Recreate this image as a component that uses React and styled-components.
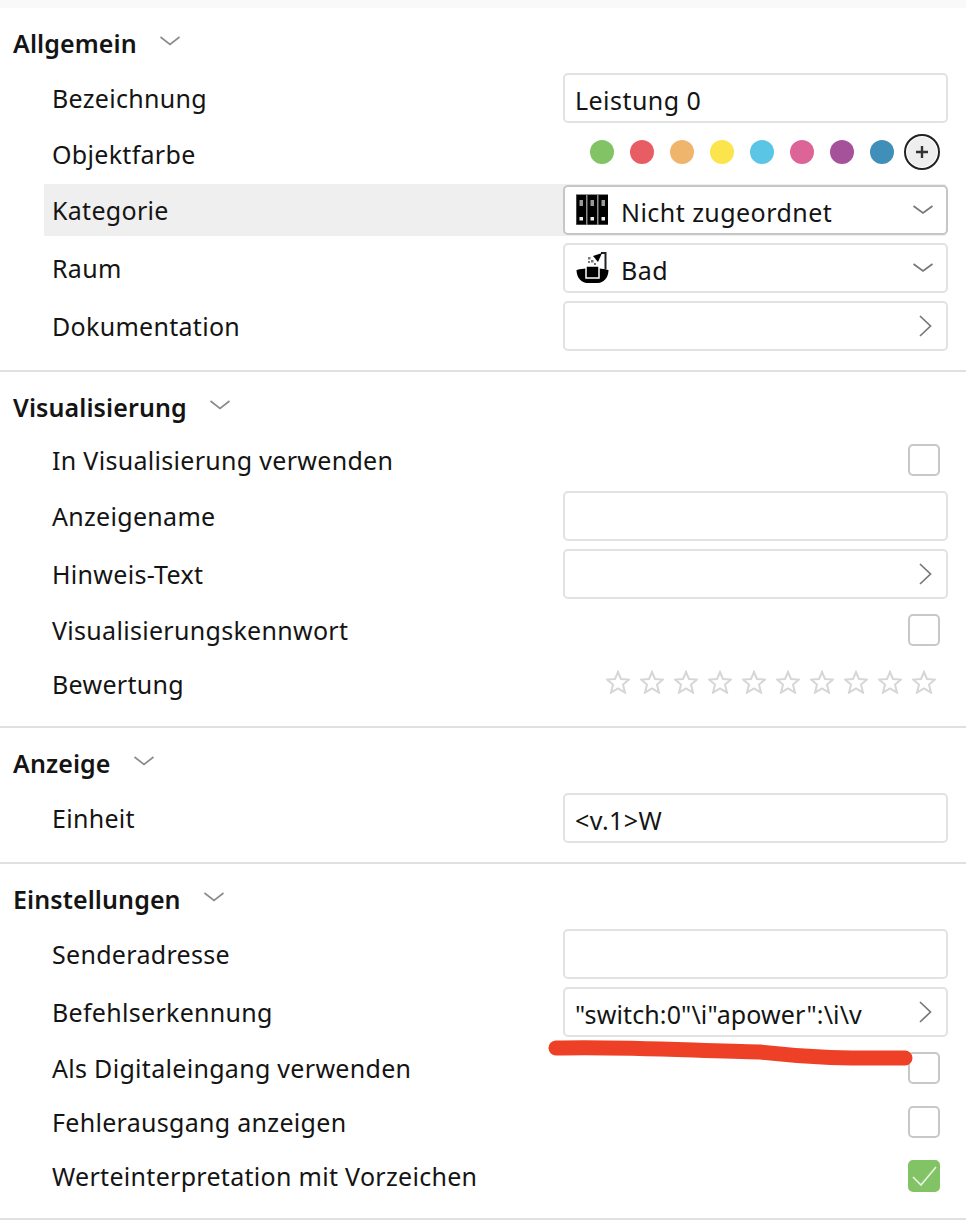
import React from "react";
import styled, { createGlobalStyle } from "styled-components";

const Global = createGlobalStyle`
  html, body { margin: 0; padding: 0; background: #fff; }
  body { font-family: "Noto Sans", "Open Sans", sans-serif; color: #141414; }
`;
const Page = styled.div`
  position: relative;
  width: 966px;
  height: 1226px;
  overflow: hidden;
  background: #fff;
  padding-top: 8px;
  box-sizing: border-box;
  box-shadow: inset 0 8px 0 #f9f9f9;
`;
const Section = styled.section`
  display: flex;
  flex-direction: column;
  gap: 8px;
  padding-bottom: 19px;
  border-bottom: 2px solid #e0e0e0;
`;
const Header = styled.header`
  display: flex;
  align-items: flex-start;
  gap: 23px;
  height: 57px;
  padding: 18px 0 0 13px;
  box-sizing: border-box;
`;
const HeaderTitle = styled.h2`
  margin: 0;
  font-size: 25px;
  line-height: 34px;
  font-weight: 600;
  letter-spacing: 0.1px;
`;
const HeaderChevron = styled.svg`
  width: 20px;
  height: 10px;
  margin-top: 10px;
  fill: none;
  stroke: #8a8a8a;
  stroke-width: 1.6;
`;
const Row = styled.div`
  position: relative;
  display: grid;
  grid-template-columns: 511px 385px;
  padding-left: 52px;
  height: ${(p) => p.$height || 50}px;
  align-items: center;
  &::before {
    content: "";
    display: ${(p) => (p.$active ? "block" : "none")};
    position: absolute;
    left: 44px;
    right: 20px;
    top: -1px;
    bottom: -1px;
    background: #efefef;
  }
`;
const Label = styled.div`
  position: relative;
  font-size: 25px;
  line-height: 34px;
  letter-spacing: 0.3px;
`;
const Field = styled.div`
  position: relative;
  display: flex;
  align-items: center;
  height: 50px;
  box-sizing: border-box;
  border: 2px solid ${(p) => (p.$active ? "#c6c6c6" : "#e2e2e2")};
  border-radius: 5px;
  background: #fff;
  padding: 3px 13px 0 10px;
  font-size: 25px;
  letter-spacing: 0.12px;
  white-space: nowrap;
`;
const FieldText = styled.span`
  flex: 1;
  margin-left: ${(p) => p.$indent || 0}px;
`;
const SpacedText = styled(FieldText)`
  letter-spacing: 0.45px;
`;
const Trail = styled.svg`
  flex: none;
  margin-top: -3px;
  width: 20px;
  height: 24px;
  fill: none;
  stroke: #777;
  stroke-width: 1.7;
`;
const LeadIcon = styled.svg`
  flex: none;
  width: 33px;
  height: 33px;
  margin: -5px 0 0 1px;
`;
const Swatches = styled.div`
  display: flex;
  align-items: center;
  height: 46px;
  margin-top: -4px;
  padding-left: 27px;
`;
const Swatch = styled.span`
  width: 24px;
  height: 24px;
  border-radius: 50%;
  margin-right: 16px;
  background: ${(p) => p.$color};
`;
const AddButton = styled.span`
  display: flex;
  align-items: center;
  justify-content: center;
  width: 36px;
  height: 36px;
  box-sizing: border-box;
  margin-left: -6px;
  border-radius: 50%;
  border: 2px solid #222;
  box-shadow: inset 0 0 0 1px #fff;
  background: #eee;
`;
const CheckCell = styled.div`
  display: flex;
  justify-content: flex-end;
  padding-right: 8px;
`;
const Check = styled.span`
  display: flex;
  align-items: center;
  justify-content: center;
  width: 32px;
  height: 32px;
  box-sizing: border-box;
  border-radius: 5px;
  border: 2px solid ${(p) => (p.$on ? "#82c366" : "#c8c8c8")};
  background: ${(p) => (p.$on ? "#82c366" : "#fff")};
`;
const Stars = styled.div`
  display: flex;
  gap: 10px;
  margin-top: -5px;
  padding-left: 43px;
`;
const Star = styled.svg`
  width: 24px;
  height: 24px;
  fill: none;
  stroke: #d6d6d6;
  stroke-width: 2;
`;
const Scribble = styled.svg`
  position: absolute;
  left: 0;
  top: 0;
  width: 966px;
  height: 1226px;
  pointer-events: none;
`;

const ChevronDown = () => (
  <Trail viewBox="0 0 20 24"><path d="M0.5 8 L10 15 L19.5 8" /></Trail>
);
const ChevronRight = () => (
  <Trail viewBox="0 0 20 24"><path d="M7 2 L17.5 12 L7 22" /></Trail>
);
const Binders = () => (
  <LeadIcon viewBox="0 0 33 33">
    <rect x="0" y="1" width="32" height="31" fill="#8c8c8c" />
    <g fill="#000">
      <rect x="0.5" y="2" width="9.5" height="29.5" />
      <rect x="11.5" y="2" width="9.5" height="29.5" />
      <rect x="22.5" y="2" width="9.5" height="29.5" />
    </g>
    <g fill="#999">
      <rect x="3.5" y="7" width="3.5" height="6" />
      <rect x="14.5" y="7" width="3.5" height="6" />
      <rect x="25.5" y="7" width="3.5" height="6" />
    </g>
    <g fill="#eee">
      <rect x="3.5" y="24" width="3.5" height="3.5" />
      <rect x="14.5" y="24" width="3.5" height="3.5" />
      <rect x="25.5" y="24" width="3.5" height="3.5" />
    </g>
  </LeadIcon>
);
const Bath = () => (
  <LeadIcon viewBox="0 0 33 33">
    <path d="M0.5 19 C0.5 19 8 17 16 17 C25 17 32.5 19 32.5 19 C32.5 27 27 32 22 32 H11 C6 32 0.5 27 0.5 19 Z" fill="#000" />
    <rect x="10" y="15" width="13" height="12" fill="#000" stroke="#fff" strokeWidth="1.5" />
    <path d="M29.5 18 V2 H25" fill="none" stroke="#222" strokeWidth="2" />
    <path d="M26 2 L17 5 L22 11 Z" fill="#000" />
    <g fill="#777">
      <rect x="12" y="6" width="2.5" height="2.5" />
      <rect x="15" y="9" width="2.5" height="2.5" />
      <rect x="18" y="12" width="2" height="2" />
      <rect x="12" y="10" width="2" height="2" />
    </g>
  </LeadIcon>
);
const SectionChevron = () => (
  <HeaderChevron viewBox="0 0 20 10"><path d="M0.5 1 L10 8.5 L19.5 1" /></HeaderChevron>
);
const StarIcon = () => (
  <Star viewBox="0 0 24 24">
    <path d="M12 2 L15 9 L23 9.6 L17 14.6 L19 22.6 L12 18.4 L5 22.6 L7 14.6 L1 9.6 L9 9 Z" />
  </Star>
);
const CheckBox = ({ on }) => (
  <CheckCell>
    <Check $on={on}>
      {on && (
        <svg width="28" height="28" viewBox="0 0 28 28" fill="none" stroke="#e9f6e2" strokeWidth="1.6">
          <path d="M3 15 L11 23 L26 5" />
        </svg>
      )}
    </Check>
  </CheckCell>
);

const colors = ["#82c366", "#e85d64", "#efb56d", "#fbe44c", "#5ac5e4", "#dc6496", "#a5529a", "#3f8fb8"];

const Title = ({ children }) => (
  <Header>
    <HeaderTitle>{children}</HeaderTitle>
    <SectionChevron />
  </Header>
);

export default function App() {
  return (
    <Page>
      <Global />
      <Section>
        <Title>Allgemein</Title>
        <Row>
          <Label>Bezeichnung</Label>
          <Field><SpacedText>Leistung 0</SpacedText></Field>
        </Row>
        <Row $height={46}>
          <Label>Objektfarbe</Label>
          <Swatches>
            {colors.map((c) => <Swatch key={c} $color={c} />)}
            <AddButton>
              <svg width="14" height="14" viewBox="0 0 14 14" stroke="#333" strokeWidth="2.4">
                <path d="M7 1 V13 M1 7 H13" />
              </svg>
            </AddButton>
          </Swatches>
        </Row>
        <Row $active>
          <Label>Kategorie</Label>
          <Field $active>
            <Binders />
            <SpacedText $indent={12}>Nicht zugeordnet</SpacedText>
            <ChevronDown />
          </Field>
        </Row>
        <Row>
          <Label>Raum</Label>
          <Field>
            <Bath />
            <SpacedText $indent={12}>Bad</SpacedText>
            <ChevronDown />
          </Field>
        </Row>
        <Row>
          <Label>Dokumentation</Label>
          <Field><FieldText /><ChevronRight /></Field>
        </Row>
      </Section>
      <Section>
        <Title>Visualisierung</Title>
        <Row $height={46}>
          <Label>In Visualisierung verwenden</Label>
          <CheckBox />
        </Row>
        <Row>
          <Label>Anzeigename</Label>
          <Field />
        </Row>
        <Row>
          <Label>Hinweis-Text</Label>
          <Field><FieldText /><ChevronRight /></Field>
        </Row>
        <Row $height={46}>
          <Label>Visualisierungskennwort</Label>
          <CheckBox />
        </Row>
        <Row $height={46}>
          <Label>Bewertung</Label>
          <Stars>
            {Array.from({ length: 10 }, (_, i) => <StarIcon key={i} />)}
          </Stars>
        </Row>
      </Section>
      <Section>
        <Title>Anzeige</Title>
        <Row>
          <Label>Einheit</Label>
          <Field><SpacedText>&lt;v.1&gt;W</SpacedText></Field>
        </Row>
      </Section>
      <Section>
        <Title>Einstellungen</Title>
        <Row>
          <Label>Senderadresse</Label>
          <Field />
        </Row>
        <Row>
          <Label>Befehlserkennung</Label>
          <Field>
            <FieldText>"switch:0"\i"apower":\i\v</FieldText>
            <ChevronRight />
          </Field>
        </Row>
        <Row $height={46}>
          <Label>Als Digitaleingang verwenden</Label>
          <CheckBox />
        </Row>
        <Row $height={46}>
          <Label>Fehlerausgang anzeigen</Label>
          <CheckBox />
        </Row>
        <Row $height={46}>
          <Label>Werteinterpretation mit Vorzeichen</Label>
          <CheckBox on />
        </Row>
      </Section>
      <Scribble viewBox="0 0 966 1226">
        <path
          d="M556 1048 C 620 1046, 700 1051, 760 1052 C 820 1059, 860 1058, 905 1058"
          fill="none"
          stroke="#ee4027"
          strokeWidth="15"
          strokeLinecap="round"
        />
      </Scribble>
    </Page>
  );
}
